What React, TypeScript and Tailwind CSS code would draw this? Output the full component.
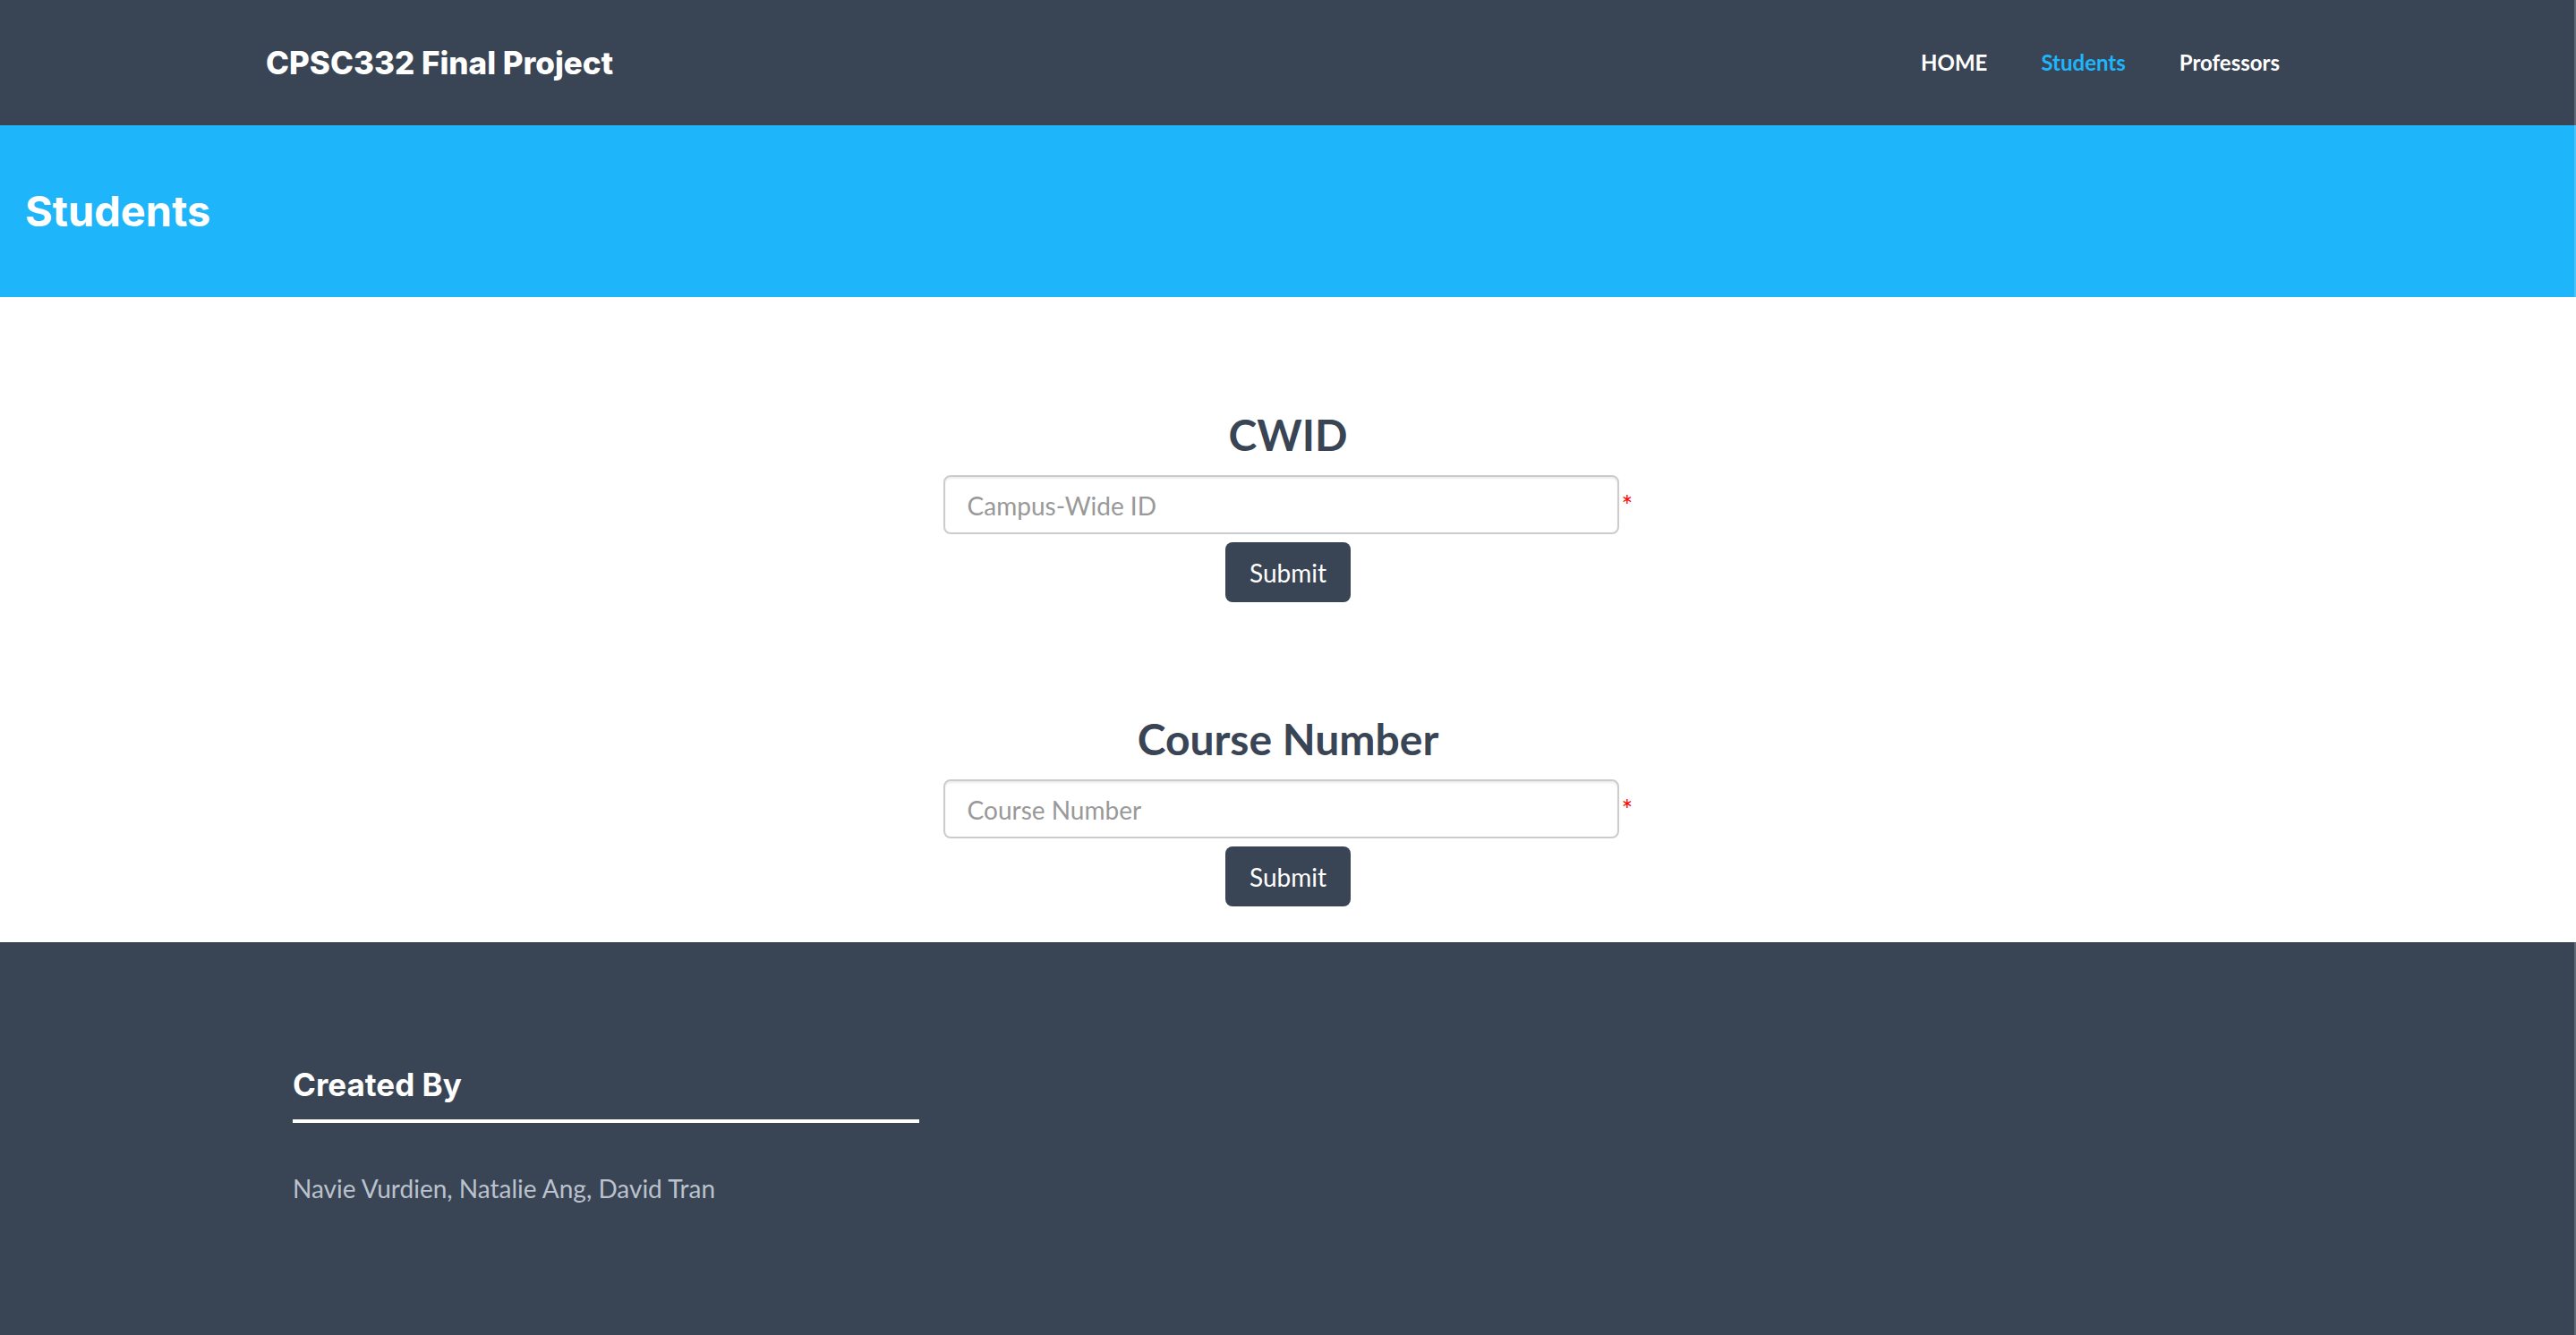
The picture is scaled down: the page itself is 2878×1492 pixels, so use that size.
import React from "react";

const lato = { fontFamily: "Lato, 'Open Sans', sans-serif" };

function Field({ placeholder }: { placeholder: string }) {
  return (
    <div className="flex justify-center items-start">
      <input
        type="text"
        placeholder={placeholder}
        className="w-[755px] h-[66px] border-2 border-[#cccccc] rounded-[8px] bg-white pl-[25px] pr-[24px] pt-[2px] text-[28px] text-[#555555] placeholder:text-[#999999] shadow-[inset_0_2px_2px_rgba(0,0,0,0.075)] outline-none font-['Lato',sans-serif]"
      />
      <span className="ml-[3px] mt-[18px] text-[30px] leading-[30px] text-[#ff0000] font-['Lato',sans-serif]">*</span>
    </div>
  );
}

function Section({ title, placeholder }: { title: string; placeholder: string }) {
  return (
    <div className="flex flex-col items-center">
      <h2 className="pt-[1px] text-[48px] leading-[60px] font-bold text-[#394454] font-['Lato',sans-serif] m-0">{title}</h2>
      <div className="mt-[15px]">
        <Field placeholder={placeholder} />
      </div>
      <button className="mt-[9px] w-[140px] h-[67px] rounded-[8px] bg-[#394454] text-white text-[28px] font-['Lato',sans-serif]">
        Submit
      </button>
    </div>
  );
}

export default function App() {
  return (
    <div className="min-h-screen w-full bg-white relative" style={lato}>
      <header className="h-[140px] bg-[#394454] pr-[4px]">
        <div className="mx-auto w-[2280px] h-full flex items-center justify-between">
          <div className="text-[35px] font-extrabold text-white font-['Inter',sans-serif] tracking-[0px]">
            CPSC332 Final Project
          </div>
          <nav className="flex items-center font-['Lato',sans-serif] font-bold text-[24px]">
            <a className="px-[30px] text-white">HOME</a>
            <a className="px-[30px] text-[#1fb5fb]">Students</a>
            <a className="px-[30px] text-white">Professors</a>
          </nav>
        </div>
      </header>
      <section className="h-[192px] bg-[#1fb5fb] flex items-center pl-[28px]">
        <h1 className="text-[47px] font-bold text-white font-['Inter',sans-serif] m-0">Students</h1>
      </section>
      <main className="pt-[123px] pb-[40px] flex flex-col gap-[122px]">
        <Section title="CWID" placeholder="Campus-Wide ID" />
        <Section title="Course Number" placeholder="Course Number" />
      </main>
      <footer className="h-[440px] bg-[#394454] pr-[4px]">
        <div className="mx-auto w-[2280px] px-[30px] pt-[138px]">
          <div className="w-[700px]">
            <h3 className="text-[35px] leading-[42px] font-bold text-white font-['Inter',sans-serif] m-0">Created By</h3>
            <div className="mt-[18px] h-[4px] bg-white" />
            <p className="mt-[53px] text-[28px] leading-[40px] text-[#bac2cd] font-['Lato',sans-serif]">
              Navie Vurdien, Natalie Ang, David Tran
            </p>
          </div>
        </div>
      </footer>
      <div className="absolute top-0 right-0 w-[2px] h-full bg-white/20" />
    </div>
  );
}
